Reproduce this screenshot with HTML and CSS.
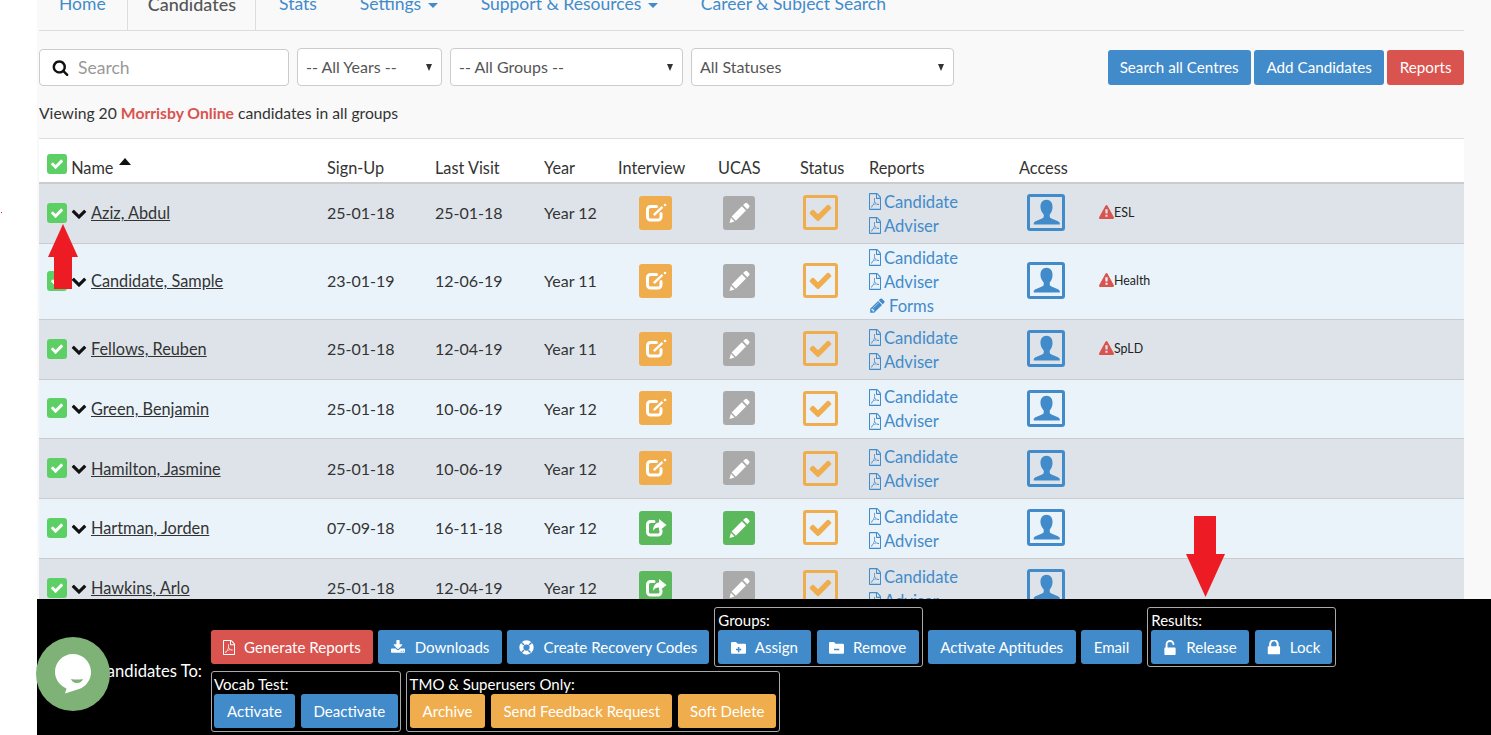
FILE: index.html
```html
<!DOCTYPE html>
<html lang="en">
<head>
<meta charset="utf-8">
<title>Candidates</title>
<link rel="stylesheet" href="styles.css">
</head>
<body>
<svg class="sprites" aria-hidden="true">
  <symbol id="i-pencil" viewBox="0 0 1792 1792"><path d="M491 1536l91-91-235-235-91 91v107h128v128h107zm523-928q0-22-22-22-10 0-17 7l-542 542q-7 7-7 17 0 22 22 22 10 0 17-7l542-542q7-7 7-17zm-54-192l416 416-832 832h-416v-416zm683 96q0 53-37 90l-166 166-416-416 166-165q36-38 90-38 53 0 91 38l235 234q37 39 37 91z"/></symbol>
  <symbol id="i-glyph-pencil" viewBox="0 0 24 24"><path d="M17.500 2.500a2 2 0 0 1 2.800 0l1.600 1.600a2 2 0 0 1 0 2.800l-1.800 1.800-4.400-4.400zM14.400 5.600l4.400 4.400L8.200 20.600l-4.400-4.400zM3 17.600l3.800 3.800L1.600 23z"/></symbol>
  <symbol id="i-check" viewBox="0 0 1792 1792"><path d="M1671 566q0 40-28 68l-724 724-136 136q-28 28-68 28t-68-28l-136-136-362-362q-28-28-28-68t28-68l136-136q28-28 68-28t68 28l294 295 656-657q28-28 68-28t68 28l136 136q28 28 28 68z"/></symbol>
  <symbol id="i-edit" viewBox="0 0 22 20"><path fill="none" stroke="#fff" stroke-width="3" stroke-linecap="round" d="M11.500 3.500H5.500a3 3 0 0 0-3 3v7.500a3 3 0 0 0 3 3H13a3 3 0 0 0 3-3v-3.500"/><path fill="none" stroke="#fff" stroke-width="2.400" d="M8.800 12.200 17.500 3.800"/><circle cx="20" cy="2" r="1.300" fill="#fff"/></symbol>
  <symbol id="i-share" viewBox="0 0 22 20"><path fill="none" stroke="#fff" stroke-width="3" stroke-linecap="round" d="M9 3.500H5.500a3 3 0 0 0-3 3v7.500a3 3 0 0 0 3 3H13a3 3 0 0 0 3-3v-1.500"/><path fill="#fff" d="M14 1l7.500 6-7.500 6V9.500c-3 0-4.800 1-6 3.500 0-4.800 2-8 6-8.500z"/></symbol>
  <symbol id="i-pdf" viewBox="128 0 1536 1792" preserveAspectRatio="none"><path d="M1596 380q28 28 48 76t20 88v1152q0 40-28 68t-68 28h-1344q-40 0-68-28t-28-68v-1600q0-40 28-68t68-28h896q40 0 88 20t76 48zm-444-244v376h376q-10-29-22-41l-313-313q-12-12-41-22zm384 1528v-1024h-416q-40 0-68-28t-28-68v-416h-768v1536h1280zm-514-593q33 26 84 56 59-7 117-7 147 0 177 49 16 22 2 52 0 1-1 2l-2 2v1q-6 38-71 38-48 0-115-20t-130-53q-221 24-392 83-153 262-242 262-15 0-28-7l-24-12q-1-1-6-5-10-10-6-36 9-40 56-91.5t132-96.5q14-9 23 6 2 2 2 4 52-85 107-197 68-136 104-262-24-82-30.5-159.5t6.5-127.5q11-40 42-40h22q23 0 35 15 18 21 9 68-2 6-4 8 1 3 1 8v30q-2 123-14 192 55 164 146 238zm-576 411q52-24 137-158-51 40-87.5 84t-49.5 74zm398-920q-15 42-2 132 1-7 7-44 0-3 7-43 1-4 4-8-1-1-1-2-1-2-1-3-1-22-13-36 0 1-1 2v2zm-124 661q135-54 284-81-2-1-13-9.5t-16-13.5q-76-67-127-176-27 86-83 197-30 56-45 83zm646-16q-24-24-140-24 76 28 124 28 14 0 18-1 0-1-2-3z"/></symbol>
  <symbol id="i-download" viewBox="0 0 1792 1792"><path d="M1344 1344q0-26-19-45t-45-19-45 19-19 45 19 45 45 19 45-19 19-45zm256 0q0-26-19-45t-45-19-45 19-19 45 19 45 45 19 45-19 19-45zm128-224v320q0 40-28 68t-68 28h-1472q-40 0-68-28t-28-68v-320q0-40 28-68t68-28h465l135 136q58 56 136 56t136-56l136-136h464q40 0 68 28t28 68zm-325-569q17 41-14 70l-448 448q-18 19-45 19t-45-19l-448-448q-31-29-14-70 17-39 59-39h256v-448q0-26 19-45t45-19h256q26 0 45 19t19 45v448h256q42 0 59 39z"/></symbol>
  <symbol id="i-lock" viewBox="224 128 1120 1408"><path d="M520 704h512v-192q0-106-75-181t-181-75-181 75-75 181v192zm832 96v576q0 40-28 68t-68 28h-960q-40 0-68-28t-28-68v-576q0-40 28-68t68-28h32v-192q0-184 132-316t316-132 316 132 132 316v192h32q40 0 68 28t28 68z"/></symbol>
  <symbol id="i-unlock" viewBox="320 0 1152 1536"><path d="M1376 768q40 0 68 28t28 68v576q0 40-28 68t-68 28h-960q-40 0-68-28t-28-68v-576q0-40 28-68t68-28h32v-320q0-185 131.5-316.5t316.5-131.5 316.5 131.5 131.5 316.5q0 26-19 45t-45 19h-64q-26 0-45-19t-19-45q0-106-75-181t-181-75-181 75-75 181v320h736z"/></symbol>
  <symbol id="i-search" viewBox="0 0 1792 1792"><path d="M1216 832q0-185-131.500-316.500t-316.500-131.500-316.500 131.500-131.500 316.500 131.500 316.500 316.500 131.500 316.500-131.500 131.500-316.500zm512 832q0 52-38 90t-90 38q-54 0-90-38l-343-342q-179 124-399 124-143 0-273.500-55.500t-225-150-150-225-55.500-273.500 55.500-273.500 150-225 225-150 273.500-55.500 273.500 55.500 225 150 150 225 55.500 273.500q0 220-124 399l343 343q37 37 37 90z"/></symbol>
  <symbol id="i-chevron" viewBox="0 0 1792 1792"><path d="M1683 808l-742 741q-19 19-45 19t-45-19l-742-741q-19-19-19-45.500t19-45.500l166-165q19-19 45-19t45 19l531 531 531-531q19-19 45-19t45 19l166 165q19 19 19 45.500t-19 45.500z"/></symbol>
  <symbol id="i-warning" viewBox="0 0 1792 1792"><path d="M1024 1375v-190q0-14-9.500-23.500t-22.500-9.500h-192q-13 0-22.500 9.500t-9.500 23.500v190q0 14 9.500 23.500t22.500 9.500h192q13 0 22.500-9.500t9.500-23.500zm-2-374l18-459q0-12-10-19-13-11-24-11h-220q-11 0-24 11-10 7-10 21l17 457q0 10 10 16.500t24 6.500h185q14 0 23.500-6.500t10.500-16.500zm-14-934l768 1408q35 63-2 126-17 29-46.500 46t-63.500 17h-1536q-34 0-63.500-17t-46.500-46q-37-63-2-126l768-1408q17-31 47-49t65-18 65 18 47 49z"/></symbol>
  <symbol id="i-user" viewBox="0 0 24 24"><path d="M12 1.500c3.200 0 5 2.500 5 6 0 2.600-1 4.900-2.300 6.100v1.700c0 .8.500 1.200 1.400 1.600l5.400 2.400c.9.400 1.500 1 1.500 1.900v.8H1.400v-.8c0-.9.600-1.500 1.500-1.900l5.400-2.400c.9-.4 1.400-.8 1.400-1.600v-1.700C8.400 12.400 7 10.100 7 7.500c0-3.500 1.800-6 5-6z"/></symbol>
  <symbol id="i-folder-plus" viewBox="0 0 24 20"><path fill-rule="evenodd" d="M2 1h6l2.500 3H22a2 2 0 0 1 2 2v12a2 2 0 0 1-2 2H2a2 2 0 0 1-2-2V3a2 2 0 0 1 2-2zm9 8v3H8v2.400h3V17.500h2.400v-3.100h3V12h-3V9z"/></symbol>
  <symbol id="i-folder-minus" viewBox="0 0 24 20"><path fill-rule="evenodd" d="M2 1h6l2.500 3H22a2 2 0 0 1 2 2v12a2 2 0 0 1-2 2H2a2 2 0 0 1-2-2V3a2 2 0 0 1 2-2zm6 11v2.400h8.400V12z"/></symbol>
  <symbol id="i-lifering" viewBox="0 0 24 24"><path fill-rule="evenodd" d="M12 .5a11.500 11.500 0 1 1 0 23 11.500 11.500 0 0 1 0-23zm0 6.500a5 5 0 1 0 0 10 5 5 0 0 0 0-10zM4.800 3.200 3.200 4.800l4 4 1.600-1.600zm14.400 0-4 4 1.600 1.600 4-4zM8.800 16.800l-1.600-1.600-4 4 1.600 1.600zm6.400-1.600-1.600 1.600 4 4 1.600-1.600z"/></symbol>
</svg>

<div class="page">
  <nav class="tabs">
    <ul class="tab-list">
      <li class="tab"><a href="#">Home</a></li>
      <li class="tab tab-active"><a href="#">Candidates</a></li>
      <li class="tab"><a href="#">Stats</a></li>
      <li class="tab"><a href="#">Settings <span class="caret"></span></a></li>
      <li class="tab"><a href="#">Support &amp; Resources <span class="caret"></span></a></li>
      <li class="tab"><a href="#">Career &amp; Subject Search</a></li>
    </ul>
  </nav>

  <div class="toolbar">
    <label class="search">
      <svg class="ico-search"><use href="#i-search"/></svg>
      <input class="search-input" type="text" placeholder="Search">
    </label>
    <div class="select select-years"><select><option>-- All Years --</option></select></div>
    <div class="select select-groups"><select><option>-- All Groups --</option></select></div>
    <div class="select select-status"><select><option>All Statuses</option></select></div>
    <div class="toolbar-actions">
      <a class="btn btn-blue btn-top" href="#">Search all Centres</a>
      <a class="btn btn-blue btn-top" href="#">Add Candidates</a>
      <a class="btn btn-red btn-top" href="#">Reports</a>
    </div>
  </div>

  <p class="viewing">Viewing 20 <strong class="brand">Morrisby Online</strong> candidates in all groups</p>

  <table class="candidates">
    <colgroup>
      <col class="c-name"><col class="c-date"><col class="c-date2"><col class="c-year"><col class="c-int"><col class="c-ucas"><col class="c-status"><col class="c-reports"><col class="c-access"><col>
    </colgroup>
    <thead>
      <tr>
        <th><span class="tick tick-head"><svg><use href="#i-check"/></svg></span> Name <span class="sort"></span></th>
        <th>Sign-Up</th><th>Last Visit</th><th>Year</th><th>Interview</th><th>UCAS</th><th>Status</th><th>Reports</th><th>Access</th><th></th>
      </tr>
    </thead>
    <tbody>
      <tr class="row-a">
        <td><div class="who"><span class="tick"><svg><use href="#i-check"/></svg></span><svg class="chev"><use href="#i-chevron"/></svg><a class="name" href="#">Aziz, Abdul</a></div></td>
        <td>25-01-18</td><td>25-01-18</td><td>Year 12</td>
        <td><span class="sq sq-int sq-orange"><svg><use href="#i-edit"/></svg></span></td>
        <td><span class="sq sq-ucas sq-grey"><svg><use href="#i-glyph-pencil"/></svg></span></td>
        <td><span class="box-check"><svg><use href="#i-check"/></svg></span></td>
        <td><a class="rep" href="#"><svg><use href="#i-pdf"/></svg>Candidate</a><a class="rep" href="#"><svg><use href="#i-pdf"/></svg>Adviser</a></td>
        <td><span class="box-user"><svg><use href="#i-user"/></svg></span></td>
        <td><span class="note"><svg><use href="#i-warning"/></svg>ESL</span></td>
      </tr>
      <tr class="row-b">
        <td><div class="who"><span class="tick"><svg><use href="#i-check"/></svg></span><svg class="chev"><use href="#i-chevron"/></svg><a class="name" href="#">Candidate, Sample</a></div></td>
        <td>23-01-19</td><td>12-06-19</td><td>Year 11</td>
        <td><span class="sq sq-int sq-orange"><svg><use href="#i-edit"/></svg></span></td>
        <td><span class="sq sq-ucas sq-grey"><svg><use href="#i-glyph-pencil"/></svg></span></td>
        <td><span class="box-check"><svg><use href="#i-check"/></svg></span></td>
        <td><a class="rep" href="#"><svg><use href="#i-pdf"/></svg>Candidate</a><a class="rep" href="#"><svg><use href="#i-pdf"/></svg>Adviser</a><a class="rep rep-forms" href="#"><svg><use href="#i-pencil"/></svg>Forms</a></td>
        <td><span class="box-user"><svg><use href="#i-user"/></svg></span></td>
        <td><span class="note"><svg><use href="#i-warning"/></svg>Health</span></td>
      </tr>
      <tr class="row-a">
        <td><div class="who"><span class="tick"><svg><use href="#i-check"/></svg></span><svg class="chev"><use href="#i-chevron"/></svg><a class="name" href="#">Fellows, Reuben</a></div></td>
        <td>25-01-18</td><td>12-04-19</td><td>Year 11</td>
        <td><span class="sq sq-int sq-orange"><svg><use href="#i-edit"/></svg></span></td>
        <td><span class="sq sq-ucas sq-grey"><svg><use href="#i-glyph-pencil"/></svg></span></td>
        <td><span class="box-check"><svg><use href="#i-check"/></svg></span></td>
        <td><a class="rep" href="#"><svg><use href="#i-pdf"/></svg>Candidate</a><a class="rep" href="#"><svg><use href="#i-pdf"/></svg>Adviser</a></td>
        <td><span class="box-user"><svg><use href="#i-user"/></svg></span></td>
        <td><span class="note"><svg><use href="#i-warning"/></svg>SpLD</span></td>
      </tr>
      <tr class="row-b">
        <td><div class="who"><span class="tick"><svg><use href="#i-check"/></svg></span><svg class="chev"><use href="#i-chevron"/></svg><a class="name" href="#">Green, Benjamin</a></div></td>
        <td>25-01-18</td><td>10-06-19</td><td>Year 12</td>
        <td><span class="sq sq-int sq-orange"><svg><use href="#i-edit"/></svg></span></td>
        <td><span class="sq sq-ucas sq-grey"><svg><use href="#i-glyph-pencil"/></svg></span></td>
        <td><span class="box-check"><svg><use href="#i-check"/></svg></span></td>
        <td><a class="rep" href="#"><svg><use href="#i-pdf"/></svg>Candidate</a><a class="rep" href="#"><svg><use href="#i-pdf"/></svg>Adviser</a></td>
        <td><span class="box-user"><svg><use href="#i-user"/></svg></span></td>
        <td></td>
      </tr>
      <tr class="row-a">
        <td><div class="who"><span class="tick"><svg><use href="#i-check"/></svg></span><svg class="chev"><use href="#i-chevron"/></svg><a class="name" href="#">Hamilton, Jasmine</a></div></td>
        <td>25-01-18</td><td>10-06-19</td><td>Year 12</td>
        <td><span class="sq sq-int sq-orange"><svg><use href="#i-edit"/></svg></span></td>
        <td><span class="sq sq-ucas sq-grey"><svg><use href="#i-glyph-pencil"/></svg></span></td>
        <td><span class="box-check"><svg><use href="#i-check"/></svg></span></td>
        <td><a class="rep" href="#"><svg><use href="#i-pdf"/></svg>Candidate</a><a class="rep" href="#"><svg><use href="#i-pdf"/></svg>Adviser</a></td>
        <td><span class="box-user"><svg><use href="#i-user"/></svg></span></td>
        <td></td>
      </tr>
      <tr class="row-b">
        <td><div class="who"><span class="tick"><svg><use href="#i-check"/></svg></span><svg class="chev"><use href="#i-chevron"/></svg><a class="name" href="#">Hartman, Jorden</a></div></td>
        <td>07-09-18</td><td>16-11-18</td><td>Year 12</td>
        <td><span class="sq sq-int sq-green"><svg><use href="#i-share"/></svg></span></td>
        <td><span class="sq sq-ucas sq-green"><svg><use href="#i-glyph-pencil"/></svg></span></td>
        <td><span class="box-check"><svg><use href="#i-check"/></svg></span></td>
        <td><a class="rep" href="#"><svg><use href="#i-pdf"/></svg>Candidate</a><a class="rep" href="#"><svg><use href="#i-pdf"/></svg>Adviser</a></td>
        <td><span class="box-user"><svg><use href="#i-user"/></svg></span></td>
        <td></td>
      </tr>
      <tr class="row-a">
        <td><div class="who"><span class="tick"><svg><use href="#i-check"/></svg></span><svg class="chev"><use href="#i-chevron"/></svg><a class="name" href="#">Hawkins, Arlo</a></div></td>
        <td>25-01-18</td><td>12-04-19</td><td>Year 12</td>
        <td><span class="sq sq-int sq-green"><svg><use href="#i-share"/></svg></span></td>
        <td><span class="sq sq-ucas sq-grey"><svg><use href="#i-glyph-pencil"/></svg></span></td>
        <td><span class="box-check"><svg><use href="#i-check"/></svg></span></td>
        <td><a class="rep" href="#"><svg><use href="#i-pdf"/></svg>Candidate</a><a class="rep" href="#"><svg><use href="#i-pdf"/></svg>Adviser</a></td>
        <td><span class="box-user"><svg><use href="#i-user"/></svg></span></td>
        <td></td>
      </tr>
    </tbody>
  </table>
</div>

<footer class="actions">
  <div class="actions-label">Candidates To:</div>
  <div class="actions-rows">
    <div class="actions-row">
      <a class="btn btn-red btn-plain" href="#"><svg class="bi bi-pdf"><use href="#i-pdf"/></svg>Generate Reports</a>
      <a class="btn btn-blue btn-plain btn-download" href="#"><svg class="bi"><use href="#i-download"/></svg>Downloads</a>
      <a class="btn btn-blue btn-plain" href="#"><svg class="bi"><use href="#i-lifering"/></svg>Create Recovery Codes</a>
      <div class="group">
        <div class="group-label">Groups:</div>
        <div class="group-btns">
          <a class="btn btn-blue btn-wide" href="#"><svg class="bi"><use href="#i-folder-plus"/></svg>Assign</a>
          <a class="btn btn-blue btn-wide" href="#"><svg class="bi"><use href="#i-folder-minus"/></svg>Remove</a>
        </div>
      </div>
      <a class="btn btn-blue btn-plain btn-wide" href="#">Activate Aptitudes</a>
      <a class="btn btn-blue btn-plain btn-wider" href="#">Email</a>
      <div class="group">
        <div class="group-label">Results:</div>
        <div class="group-btns">
          <a class="btn btn-blue" href="#"><svg class="bi bi-lock"><use href="#i-unlock"/></svg>Release</a>
          <a class="btn btn-blue" href="#"><svg class="bi bi-lock"><use href="#i-lock"/></svg>Lock</a>
        </div>
      </div>
    </div>
    <div class="actions-row actions-row-2">
      <div class="group group-vocab">
        <div class="group-label">Vocab Test:</div>
        <div class="group-btns">
          <a class="btn btn-blue btn-wider" href="#">Activate</a>
          <a class="btn btn-blue btn-wide" href="#">Deactivate</a>
        </div>
      </div>
      <div class="group">
        <div class="group-label">TMO &amp; Superusers Only:</div>
        <div class="group-btns">
          <a class="btn btn-orange btn-wider" href="#">Archive</a>
          <a class="btn btn-orange" href="#">Send Feedback Request</a>
          <a class="btn btn-orange" href="#">Soft Delete</a>
        </div>
      </div>
    </div>
  </div>
</footer>

<div class="chat" aria-label="Chat">
  <svg viewBox="0 0 74 74"><path fill="#fff" d="M37 17c10 0 18 8 18 18 0 8-5 14.500-12 17l-14 4.500 1.500-5C24 48.500 19 42.500 19 35c0-10 8-18 18-18z"/><path fill="#7fb276" d="M35 42c4 .8 8 .8 12 0-1 2.500-3 4-6 4s-5-1.500-6-4z"/></svg>
</div>

<svg class="arrow arrow-up" viewBox="0 0 30 65"><path d="M15 0 30 33H24V65H6V33H0z"/></svg>
<svg class="arrow arrow-down" viewBox="0 0 39 81"><path d="M8 0H30V38H39L19.500 81 0 38H8z"/></svg>
<span class="red-dot"></span>
</body>
</html>
```
FILE: styles.css
```css
* { box-sizing: border-box; }
html, body { margin: 0; height: 100%; }
body {
  background: #fff;
  color: #333;
  font-family: Lato, "Open Sans", sans-serif;
  font-size: 16px;
  overflow: hidden;
}
a { text-decoration: none; }
.sprites { display: none; }

.page {
  height: 735px;
  margin-left: 37px;
  padding: 0 27px 0 2px;
  background: #f9f9f9;
  overflow: hidden;
}

/* tabs */
.tabs { height: 31px; overflow: hidden; border-bottom: 1px solid #ddd; }
.tab-list {
  display: flex;
  align-items: flex-end;
  height: 30px;
  margin: 0;
  padding: 0;
  list-style: none;
}
.tab {
  margin-right: 3px;
  padding: 0 19px 14px;
  border: 1px solid transparent;
  border-bottom: 0;
  font-size: 17.500px;
  line-height: 24px;
}
.tab:first-child { margin-right: 1px; }
.tab a { color: #428bca; }
.tab-active {
  padding-left: 20px;
  background: #f9f9f9;
  border-color: #ddd;
  font-size: 18px;
  font-weight: 500;
}
.tab-active a { color: #555; }
.caret {
  display: inline-block;
  margin-left: 2px;
  vertical-align: middle;
  border-top: 5px solid #428bca;
  border-left: 5px solid transparent;
  border-right: 5px solid transparent;
}

/* toolbar */
.toolbar { display: flex; align-items: center; height: 38px; margin-top: 17px; }
.search {
  display: flex;
  align-items: center;
  width: 250px;
  height: 37px;
  margin-top: 1px;
  margin-right: 8px;
  padding-left: 12px;
  background: #fff;
  border: 1px solid #ccc;
  border-radius: 4px;
}
.ico-search { width: 17px; height: 17px; margin-right: 9px; fill: #111; }
.search-input {
  flex: 1;
  min-width: 0;
  padding: 0;
  border: 0;
  outline: 0;
  background: transparent;
  font: 17.500px Lato, sans-serif;
  color: #333;
}
.search-input::placeholder { color: #999; opacity: 1; }
.select { position: relative; height: 38px; margin-right: 8px; }
.select::after {
  content: "";
  position: absolute;
  top: 16px;
  right: 10px;
  border-top: 7px solid #333;
  border-left: 3.500px solid transparent;
  border-right: 3.500px solid transparent;
}
.select select {
  appearance: none;
  width: 100%;
  height: 100%;
  padding: 0 8px 2px;
  background: #fff;
  border: 1px solid #ccc;
  border-radius: 4px;
  font: 16px Lato, sans-serif;
  color: #555;
}
.select-years { width: 145px; }
.select-groups { width: 233px; }
.select-status { width: 263px; margin-right: 0; }
.toolbar-actions { display: flex; gap: 3px; margin-left: auto; }
.toolbar-actions .btn:first-child { padding-left: 12px; }

/* buttons */
.btn {
  display: inline-flex;
  align-items: center;
  height: 34px;
  padding: 0 12px;
  border-radius: 3px;
  color: #fff;
  font-size: 15.100px;
  white-space: nowrap;
}
.btn-top { height: 35px; font-size: 15.200px; padding: 0 12.500px; }
.btn-wide { padding: 0 12.500px; }
.btn-wider { padding: 0 13px; }
.btn-blue { background: #428bca; }
.btn-red { background: #d9534f; }
.btn-orange { background: #f0ad4e; font-size: 15px; }
.bi { flex: none; width: 15px; height: 15px; margin-right: 9px; fill: #fff; }
.bi-pdf { width: 12px; }
.bi-lock { width: 14px; }
.btn-download { padding-right: 13px; }
.btn-download .bi { width: 16px; }

.viewing { margin: 0; padding-top: 17px; height: 53px; line-height: 20px; font-size: 15.700px; border-bottom: 1px solid #ddd; }
.brand { color: #d9534f; font-weight: 700; }

/* table */
.candidates {
  width: 100%;
  border-collapse: collapse;
  table-layout: fixed;
  background: #fff;
}
.c-name { width: 280px; }
.c-date { width: 108px; }
.c-date2 { width: 109px; }
.c-year { width: 74px; }
.c-int { width: 100px; }
.c-ucas { width: 82px; }
.c-status { width: 69px; }
.c-reports { width: 150px; }
.c-access { width: 80px; }
.candidates th {
  height: 44px;
  padding: 0 8px 5px;
  text-align: left;
  vertical-align: bottom;
  font-size: 16.300px;
  font-weight: 400;
  white-space: nowrap;
}
.candidates td { height: 59.670px; padding: .750px 8px 2.250px; vertical-align: middle; border-top: 1px solid #ccc; }
.candidates tbody tr:first-child td { height: 60.670px; border-top: 2px solid #ccc; }
.row-a { background: #dde3e9; }
.row-b { background: #ebf3fa; }

.tick {
  display: inline-flex;
  align-items: center;
  justify-content: center;
  flex: none;
  width: 20px;
  height: 20px;
  background: #5cd065;
  border-radius: 3px;
}
.tick svg { width: 14px; height: 14px; fill: #fff; }
.tick-head { vertical-align: 3px; }
.sort {
  display: inline-block;
  margin-left: 1px;
  vertical-align: 9px;
  border-bottom: 7px solid #111;
  border-left: 6.500px solid transparent;
  border-right: 6.500px solid transparent;
}
.who { display: flex; align-items: center; }
.chev { width: 16px; height: 16px; margin: 0 4px; fill: #111; flex: none; }
.name { color: #333; text-decoration: underline; font-size: 16.300px; }

.sq {
  display: flex;
  align-items: center;
  justify-content: center;
  height: 34px;
  border-radius: 3px;
}
.sq svg { fill: #fff; }
.sq-int { width: 33px; margin-left: 21px; }
.sq-int svg { width: 22px; height: 20px; }
.sq-ucas { width: 32px; margin-left: 5px; }
.sq-ucas svg { width: 23px; height: 23px; }
.sq-orange { background: #f0ad4e; }
.sq-grey { background: #aaa; }
.sq-green { background: #5cb85c; }
.box-check {
  display: flex;
  align-items: center;
  justify-content: center;
  width: 35px;
  height: 35px;
  margin-left: 3px;
  border: 3px solid #f0ad4e;
  border-radius: 3px;
}
.box-check svg { width: 25px; height: 25px; fill: #f0ad4e; }
.box-user {
  display: flex;
  align-items: center;
  justify-content: center;
  width: 38px;
  height: 37px;
  margin-left: 8px;
  border: 3px solid #428bca;
  border-radius: 3px;
}
.box-user svg { width: 29px; height: 29px; fill: #428bca; }
.rep { display: flex; align-items: center; height: 24px; padding-top: 2px; color: #428bca; font-size: 16.600px; }
.rep svg { width: 12px; height: 17px; margin-right: 3px; fill: #428bca; flex: none; }
.rep-forms svg { width: 17px; height: 17px; margin-right: 3px; }
.note { display: flex; align-items: center; font-size: 12.400px; color: #222; }
.note svg { width: 15px; height: 15px; fill: #d9534f; flex: none; }

/* fixed action bar */
.actions {
  position: fixed;
  left: 37px;
  right: 0;
  bottom: 0;
  height: 136px;
  display: flex;
  align-items: center;
  background: #000;
  color: #fff;
}
.actions-label { width: 165px; margin-right: 9px; margin-top: 7px; text-align: right; font-size: 16.600px; white-space: nowrap; }
.actions-rows { display: flex; flex-direction: column; gap: 4px; margin-top: 5px; }
.actions-row { display: flex; align-items: flex-end; gap: 5px; }
.btn-plain { margin-bottom: 3px; }
.group { padding: 2px 3px; border: 1px solid #aaa; border-radius: 3px; }
.actions-row-2 .group { padding-bottom: 3px; }
.actions-row-2 .group-vocab { padding: 2px 2px 3px; }
.group-label { height: 20px; font-size: 15px; line-height: 20px; }
.group-btns { display: flex; gap: 6px; }

/* overlays */
.chat {
  position: fixed;
  left: 36px;
  top: 637px;
  width: 74px;
  height: 74px;
  background: #7fb276;
  border-radius: 50%;
}
.chat svg { display: block; width: 100%; height: 100%; }
.arrow { position: fixed; fill: #ed1c24; }
.arrow-up { left: 48px; top: 224px; width: 30px; height: 65px; }
.arrow-down { left: 1186px; top: 516px; width: 39px; height: 81px; }
.red-dot { position: fixed; left: 1px; top: 212px; width: 1px; height: 1px; background: #ed1c24; }
```
